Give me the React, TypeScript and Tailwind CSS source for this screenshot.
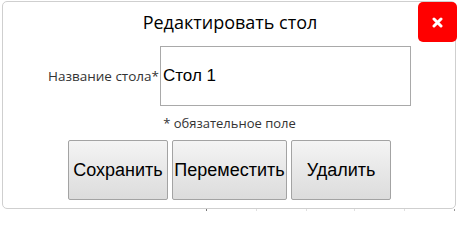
import React from "react";

const ui = { fontFamily: '"Open Sans", "Noto Sans", sans-serif' };
const arial = { fontFamily: '"Liberation Sans", Arial, sans-serif' };

function Btn({ label, width }: { label: string; width: string }) {
  return (
    <button
      type="button"
      className={`${width} h-[60px] border border-[#a3a3a3] rounded-[2px] bg-gradient-to-b from-[#f4f4f4] to-[#dcdcdc] text-[18px] text-black`}
      style={arial}
    >
      {label}
    </button>
  );
}

export default function App() {
  return (
    <div className="w-[460px] h-[211px] bg-white overflow-hidden">
      <div className="ml-[2px] mt-[1px] w-[454px] h-[208px] border border-[#cfcfcf] rounded-[5px] bg-white relative flex flex-col">
        <div className="h-[38px] flex items-center justify-center">
          <h1 className="text-[18px] text-black leading-none pt-[2px] pl-[2px]" style={ui}>
            Редактировать стол
          </h1>
        </div>
        <button
          type="button"
          className="absolute right-[-2px] top-0 w-[39px] h-[40px] rounded-[5px] bg-[#ff0000] flex items-center justify-center"
        >
          <svg width="11" height="11" viewBox="0 0 11 11">
            <path d="M2 2L9 9M9 2L2 9" stroke="#fff" strokeWidth="3" strokeLinecap="round" />
          </svg>
        </button>

        <div className="flex items-center mt-[6px]">
          <label className="w-[157px] text-right text-[13.5px] text-[#333] pr-[1px]" style={ui}>
            Название стола*
          </label>
          <input
            readOnly
            value="Стол 1"
            className="w-[251px] h-[60px] border border-[#a9a9a9] px-[2px] text-[17px] text-black outline-none"
            style={arial}
          />
        </div>

        <p className="text-center text-[13px] text-[#333] mt-[11px] leading-none pl-[1px]" style={ui}>
          * обязательное поле
        </p>

        <div className="flex justify-center gap-[4px] mt-[10px] pl-[1px]">
          <Btn label="Сохранить" width="w-[100px]" />
          <Btn label="Переместить" width="w-[115px]" />
          <Btn label="Удалить" width="w-[100px]" />
        </div>
      </div>
      <div className="flex h-[3px] ml-[206px]">
        <div className="w-[50px] border-l border-[#777]" />
        <div className="w-[50px] border-l border-[#e0e0e0]" />
        <div className="w-[48px] border-l border-[#e0e0e0]" />
        <div className="w-[50px] border-l border-[#e0e0e0]" />
        <div className="w-[50px] border-l border-[#e0e0e0]" />
        <div className="w-[4px] border-l border-[#999]" />
      </div>
    </div>
  );
}
